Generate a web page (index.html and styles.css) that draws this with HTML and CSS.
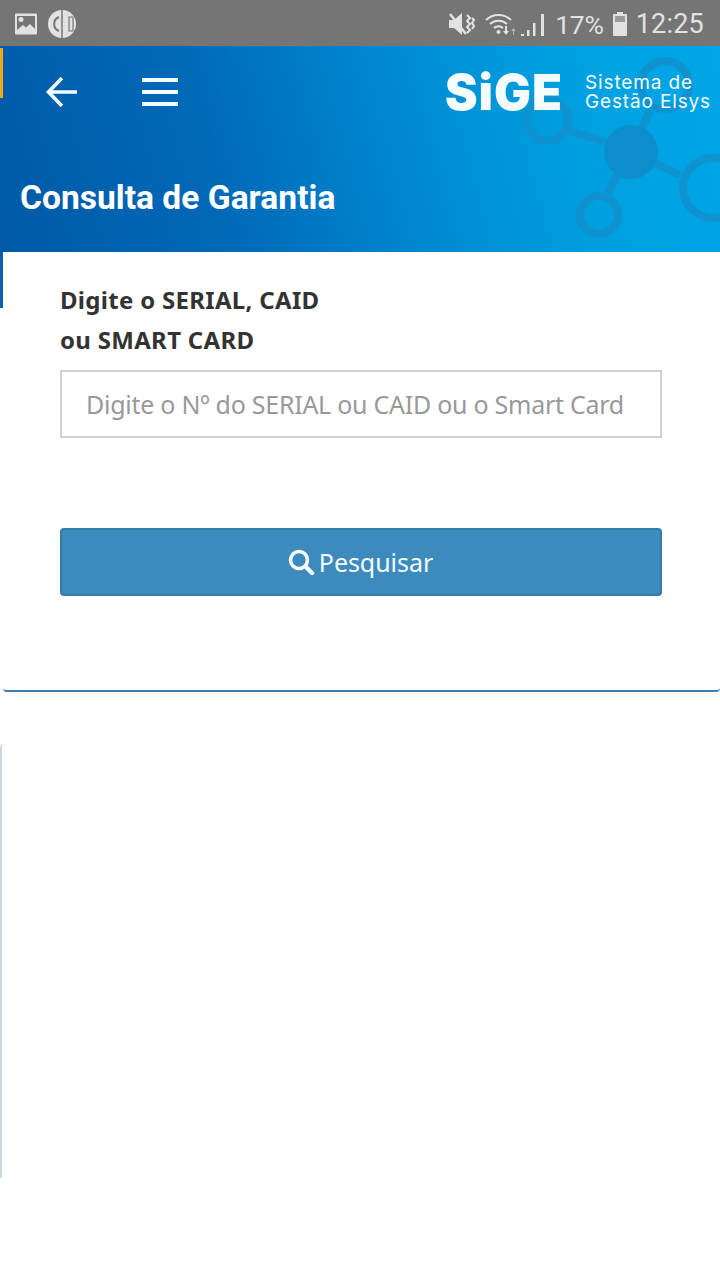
FILE: index.html
```html
<!DOCTYPE html>
<html lang="pt">
<head>
<meta charset="utf-8">
<title>Consulta de Garantia</title>
<link rel="stylesheet" href="styles.css">
</head>
<body>
<div class="page">
  <div class="status">
    <div class="status-left">
      <svg class="ico" width="26" height="24" viewBox="0 0 26 24"><path fill="#e2e2e2" d="M3 1.500h20a1 1 0 0 1 1 1v19a1 1 0 0 1-1 1H3a1 1 0 0 1-1-1v-19a1 1 0 0 1 1-1z"/><path fill="#757575" d="M4 4h18v13l-5-5-4 3.500-3-2.500-6 5z"/><circle cx="8" cy="7.500" r="2.500" fill="#e2e2e2"/></svg>
      <svg class="ico" width="30" height="30" viewBox="0 0 30 30"><circle cx="15" cy="15" r="14" fill="#e2e2e2"/><path d="M15 1v28" stroke="#757575" stroke-width="1.500"/><path d="M12 8a7.500 7.500 0 0 0 0 14" fill="none" stroke="#757575" stroke-width="2"/><path d="M22 8h4v14h-4z" fill="none" stroke="#757575" stroke-width="1.200"/></svg>
    </div>
    <div class="status-right">
      <svg class="ico mute" width="28" height="26" viewBox="0 0 28 26"><path fill="#e2e2e2" d="M1 9h5l8-7v22l-8-7H1z"/><path stroke="#e2e2e2" stroke-width="2.500" d="M2 3l16 20" /><path d="M19 4l3 3-3 3 3 3-3 3 3 3-3 3M24 7l2 2-2 3 2 3-2 3" fill="none" stroke="#e2e2e2" stroke-width="2"/></svg>
      <svg class="ico wifi" width="34" height="26" viewBox="0 0 34 26"><g fill="none" stroke="#e2e2e2" stroke-width="2"><path d="M1 9a18 18 0 0 1 25 0"/><path d="M5 13a13 13 0 0 1 17 0"/><path d="M9 17a7 7 0 0 1 9 0"/></g><circle cx="13.500" cy="21" r="2" fill="#e2e2e2"/><path fill="#e2e2e2" d="M20 15h2v5h2l-3 4-3-4h2z"/><path fill="#b5b5b5" d="M28 24v-4h-2l2.500-3 2.500 3h-2v4z"/></svg>
      <svg class="ico signal" width="26" height="26" viewBox="0 0 26 26"><path fill="#e2e2e2" d="M0 25h3v-2H0zM6 25h2.500v-6H6zM12 25h2.500V12H12zM20 25h3V3h-3z"/></svg>
      <span class="pct">17%</span>
      <svg class="ico" width="16" height="26" viewBox="0 0 16 26"><path fill="#e2e2e2" d="M5 1h6v2h3a1 1 0 0 1 1 1v20a1 1 0 0 1-1 1H2a1 1 0 0 1-1-1V4a1 1 0 0 1 1-1h3z"/><path fill="#9a9a9a" d="M3 5h10v6H3z"/></svg>
      <span class="clock">12:25</span>
    </div>
  </div>

  <header class="hero">
    <span class="mark-yellow"></span>
    <svg class="molecule" width="200" height="206" viewBox="0 0 200 206">
      <g fill="none" stroke="#0f92d0" stroke-width="8">
        <circle cx="27" cy="74" r="21"/>
        <circle cx="79" cy="169" r="19"/>
        <circle cx="193" cy="142" r="30"/>
        <circle cx="145" cy="39" r="24"/>
        <path d="M47 84l38 12M97 129l-9 18M135 117l25 12M111 106l19-42"/>
      </g>
      <circle cx="111" cy="106" r="27" fill="#0d8dcb"/>
    </svg>
    <div class="hero-top">
      <div class="nav">
        <svg class="back" width="36" height="36" viewBox="0 0 36 36"><path d="M33 18H5M18 4L4.500 18 18 32" fill="none" stroke="#f2fcff" stroke-width="3.600"/></svg>
        <div class="burger"><span></span><span></span><span></span></div>
      </div>
      <div class="logo">
        <span class="logo-name">SiGE</span>
        <span class="logo-sub">Sistema de<br>Gestão Elsys</span>
      </div>
    </div>
    <h1 class="title">Consulta de Garantia</h1>
  </header>

  <main class="card">
    <span class="mark-blue"></span>
    <label class="label" for="serial">Digite o SERIAL, CAID<br>ou SMART CARD</label>
    <input id="serial" class="field" type="text" placeholder="Digite o Nº do SERIAL ou CAID ou o Smart Card">
    <button class="btn" type="button">
      <svg width="28" height="28" viewBox="0 0 28 28"><circle cx="12" cy="12" r="8.500" fill="none" stroke="#f4fcff" stroke-width="3.600"/><path d="M18.500 18.500l6.500 6.500" stroke="#f4fcff" stroke-width="4.400" stroke-linecap="round"/></svg>
      <span>Pesquisar</span>
    </button>
  </main>

  <section class="panel"></section>
</div>
</body>
</html>
```

FILE: styles.css
```css
* { box-sizing: border-box; }
html, body { margin: 0; padding: 0; background: #fff; }
.page { width: 720px; height: 1280px; overflow: hidden; font-family: "Noto Sans", sans-serif; }

.status { height: 46px; background: #757575; display: flex; justify-content: space-between; align-items: center; padding: 2px 16px 0 13px; color: #e2e2e2; font-family: Roboto, sans-serif; }
.status-left, .status-right { display: flex; align-items: center; }
.status-left { gap: 8px; }
.ico { display: block; flex: none; }
.wifi { margin-left: 9px; margin-right: 2px; }
.pct { font-size: 26.500px; margin: 0 8px 0 8px; letter-spacing: -.2px; }
.clock { font-size: 27px; margin-left: 8px; letter-spacing: .2px; }

.hero { position: relative; height: 206px; overflow: hidden; background: linear-gradient(75deg, #0059a6 0%, #0069b8 30%, #0088d0 55%, #00a0e0 78%, #00a6e6 100%); padding: 0 9px 0 20px; display: flex; flex-direction: column; }
.mark-yellow { position: absolute; left: 0; top: 2px; width: 3px; height: 50px; background: #eca91f; }
.molecule { position: absolute; right: 0; top: 0; }
.hero-top { position: relative; display: flex; justify-content: space-between; align-items: center; height: 92px; }
.nav { display: flex; align-items: center; gap: 62px; margin-left: 24px; }
.back { display: block; }
.burger { width: 36px; display: flex; flex-direction: column; gap: 8px; }
.burger span { display: block; height: 4px; background: #f2fcff; }
.logo { display: flex; align-items: center; gap: 22px; color: #f4fcff; }
.logo-name { font-family: Inter, sans-serif; font-weight: 900; font-size: 49px; letter-spacing: 1px; line-height: 1; }
.logo-sub { font-family: Inter, sans-serif; font-size: 19px; line-height: 19px; letter-spacing: .85px; }
.title { position: relative; margin: 41px 0 0; font-family: Roboto, sans-serif; font-weight: 700; font-size: 33.600px; line-height: 38px; color: #fff; letter-spacing: 0; }

.card { position: relative; height: 440px; margin-left: 3px; padding: 28px 58px 0 57px; border-bottom: 2px solid #3a7db0; border-radius: 0 0 4px 4px; display: flex; flex-direction: column; }
.mark-blue { position: absolute; left: -3px; top: 0; width: 3px; height: 56px; background: #0a62ad; }
.label { font-weight: 700; font-size: 24px; line-height: 40px; color: #333; letter-spacing: .3px; }
.field { display: block; width: 602px; height: 68px; margin-top: 10px; border: 2px solid #d2d2d2; background: #fff; padding: 0 24px; font-family: "Noto Sans", sans-serif; font-size: 25px; letter-spacing: -.26px; color: #555; outline: none; }
.field::placeholder { color: #999; opacity: 1; }
.btn { display: flex; justify-content: center; align-items: center; gap: 4px; width: 602px; height: 68px; margin-top: 90px; background: #3d8bbd; border: 2px solid #357ca9; border-radius: 4px; color: #f4fcff; font-family: "Noto Sans", sans-serif; font-size: 25px; letter-spacing: -.05px; padding: 0 2px 0 0; }
.btn svg { display: block; }

.panel { height: 434px; margin-top: 52px; border-left: 2px solid #c6dbe4; border-radius: 4px 0 0 0; }
```
